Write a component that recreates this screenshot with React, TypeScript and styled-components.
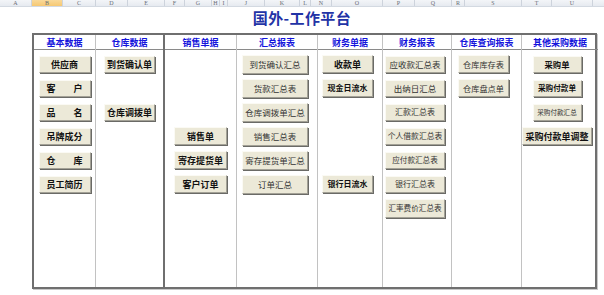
import React from 'react';
import styled, { createGlobalStyle } from 'styled-components';

const GlobalStyle = createGlobalStyle`
  html, body {
    margin: 0;
    padding: 0;
    background: #fff;
  }
  body {
    width: 604px;
    height: 295px;
    overflow: hidden;
    font-family: "Noto Sans CJK SC", "Noto Sans", sans-serif;
  }
`;

// excel column letters with their widths in px
const letters: [string, number][] = [
  ['A', 32], ['B', 31], ['C', 33], ['D', 32], ['E', 37], ['F', 20], ['G', 27],
  ['H', 8], ['I', 8], ['J', 37], ['K', 35], ['L', 11], ['N', 21], ['O', 51],
  ['P', 32], ['Q', 37], ['R', 13], ['S', 57], ['T', 30], ['U', 41],
];

type Item = {
  label: string;
  row: number;
  bold?: boolean;
  size?: number;
  w?: number;
  h?: number;
  spread?: boolean;
};

type Col = {
  title: string;
  w: number;
  strong?: boolean;
  bw: number;
  bh: number;
  bold: boolean;
  size: number;
  nudge?: number;
  items: Item[];
};

const columns: Col[] = [
  {
    title: '基本数据', w: 62, bw: 52, bh: 17, bold: true, size: 9,
    items: [
      { label: '供应商', row: 0 },
      { label: '客户', row: 1, spread: true },
      { label: '品名', row: 2, spread: true },
      { label: '吊牌成分', row: 3 },
      { label: '仓库', row: 4, spread: true },
      { label: '员工简历', row: 5 },
    ],
  },
  {
    title: '仓库数据', w: 69, strong: true, bw: 51, bh: 17, bold: true, size: 9,
    items: [
      { label: '到货确认单', row: 0 },
      { label: '仓库调拨单', row: 2 },
    ],
  },
  {
    title: '销售单据', w: 72, bw: 53, bh: 18, bold: true, size: 9,
    items: [
      { label: '销售单', row: 3 },
      { label: '寄存提货单', row: 4 },
      { label: '客户订单', row: 5 },
    ],
  },
  {
    title: '汇总报表', w: 81, bw: 66, bh: 19, bold: false, size: 8.5, nudge: 4,
    items: [
      { label: '到货确认汇总', row: 0 },
      { label: '货款汇总表', row: 1 },
      { label: '仓库调拨单汇总', row: 2 },
      { label: '销售汇总表', row: 3 },
      { label: '寄存提货单汇总', row: 4 },
      { label: '订单汇总', row: 5 },
    ],
  },
  {
    title: '财务单据', w: 65, bw: 51, bh: 18, bold: true, size: 8, nudge: 5,
    items: [
      { label: '收款单', row: 0, size: 9 },
      { label: '现金日流水', row: 1 },
      { label: '银行日流水', row: 5 },
    ],
  },
  {
    title: '财务报表', w: 69, bw: 60, bh: 17, bold: false, size: 8, nudge: 4,
    items: [
      { label: '应收款汇总表', row: 0, size: 8.5 },
      { label: '出纳日汇总', row: 1, size: 8.5 },
      { label: '汇款汇总表', row: 2 },
      { label: '个人借款汇总表', row: 3, size: 7.8 },
      { label: '应付款汇总表', row: 4, size: 7.6 },
      { label: '银行汇总表', row: 5 },
      { label: '汇率费价汇总表', row: 6, size: 7.6, h: 19 },
    ],
  },
  {
    title: '仓库查询报表', w: 70, bw: 51, bh: 18, bold: false, size: 8.2, nudge: 6,
    items: [
      { label: '仓库库存表', row: 0 },
      { label: '仓库盘点单', row: 1 },
    ],
  },
  {
    title: '其他采购数据', w: 73, bw: 49, bh: 17, bold: true, size: 8.3, nudge: 6,
    items: [
      { label: '采购单', row: 0 },
      { label: '采购付款单', row: 1, size: 7.6 },
      { label: '采购付款汇总', row: 2, size: 6.6, bold: false },
      { label: '采购付款单调整', row: 3, size: 9, w: 70, h: 18 },
    ],
  },
];

const App = () => {
  return (
    <>
      <GlobalStyle />
      <Sheet>
        <LetterBar>
          {letters.map(([l, w]) => (
            <Letter key={l} $w={w} $active={l === 'B'}>{l}</Letter>
          ))}
        </LetterBar>
        <TitleRow>
          <Title>国外-工作平台</Title>
        </TitleRow>
        <Board>
          {columns.map((c) => (
            <Column key={c.title} $w={c.w} $strong={!!c.strong}>
              <Head>{c.title}</Head>
              <Body $nudge={c.nudge ?? 0}>
                {c.items.map((it) => (
                  <Button
                    key={it.label}
                    $row={it.row}
                    $w={it.w ?? c.bw}
                    $h={it.h ?? c.bh}
                    $bold={it.bold ?? c.bold}
                    $size={it.size ?? c.size}
                    $spread={!!it.spread}
                  >
                    {it.spread
                      ? it.label.split('').map((ch) => <span key={ch}>{ch}</span>)
                      : it.label}
                  </Button>
                ))}
              </Body>
            </Column>
          ))}
        </Board>
      </Sheet>
    </>
  );
};

const Sheet = styled.div`
  display: flex;
  flex-direction: column;
  width: 604px;
  height: 295px;
`;

const LetterBar = styled.div`
  display: flex;
  height: 7px;
  overflow: hidden;
  background: linear-gradient(to bottom, #f3f5f8, #e6eaf0);
  border-bottom: 1px solid #d3d9e1;
  box-sizing: border-box;
`;

const Letter = styled.div<{ $w: number; $active: boolean }>`
  flex: 0 0 ${(p) => p.$w}px;
  box-sizing: border-box;
  border-right: 1px solid #cdd3dc;
  background: ${(p) => (p.$active ? 'linear-gradient(to bottom, #f9d99a, #f6c873)' : 'transparent')};
  font-family: "Liberation Serif", serif;
  font-size: 6px;
  line-height: 6px;
  color: #6a6e76;
  text-align: center;
`;

const TitleRow = styled.div`
  display: flex;
  justify-content: center;
  height: 26px;
  padding-top: 2px;
  box-sizing: border-box;
`;

const Title = styled.div`
  font-size: 15px;
  line-height: 18px;
  font-weight: 700;
  color: #2233a6;
  letter-spacing: 0.4px;
`;

const Board = styled.div`
  display: flex;
  margin-left: 32px;
  width: 565px;
  height: 256px;
  box-sizing: border-box;
  border: 2px solid #6f6f6f;
  box-shadow: 1px 1px 0 #c8c8c8;
`;

const Column = styled.div<{ $w: number; $strong: boolean }>`
  display: flex;
  flex-direction: column;
  flex: 0 0 ${(p) => p.$w}px;
  box-sizing: border-box;
  border-right: ${(p) => (p.$strong ? '2px solid #6f6f6f' : '1px solid #c2c2c2')};

  &:last-child {
    border-right: none;
  }
`;

const Head = styled.div`
  height: 15px;
  box-sizing: border-box;
  border-bottom: 1px solid #8a8a8a;
  display: flex;
  align-items: center;
  justify-content: center;
  font-size: 9px;
  font-weight: 700;
  color: #1414dc;
`;

const Body = styled.div<{ $nudge: number }>`
  flex: 1;
  display: grid;
  grid-auto-rows: 24px;
  align-content: start;
  justify-items: center;
  align-items: center;
  padding-top: 2px;
  padding-right: ${(p) => p.$nudge}px;
`;

const Button = styled.div<{
  $row: number;
  $w: number;
  $h: number;
  $bold: boolean;
  $size: number;
  $spread: boolean;
}>`
  grid-row: ${(p) => p.$row + 1};
  grid-column: 1;
  width: ${(p) => p.$w}px;
  height: ${(p) => p.$h}px;
  box-sizing: border-box;
  display: flex;
  align-items: center;
  justify-content: ${(p) => (p.$spread ? 'space-between' : 'center')};
  padding: ${(p) => (p.$spread ? '0 7px' : '0')};
  background: #ece9d8;
  border: 1px solid;
  border-color: #fbfaf4 #a3a196 #a3a196 #fbfaf4;
  box-shadow: 1px 1px 0 #6a6a66;
  font-size: ${(p) => p.$size}px;
  font-weight: ${(p) => (p.$bold ? 700 : 400)};
  color: ${(p) => (p.$bold ? '#111' : '#333')};
  white-space: nowrap;
  line-height: 1;
`;

export default App;
